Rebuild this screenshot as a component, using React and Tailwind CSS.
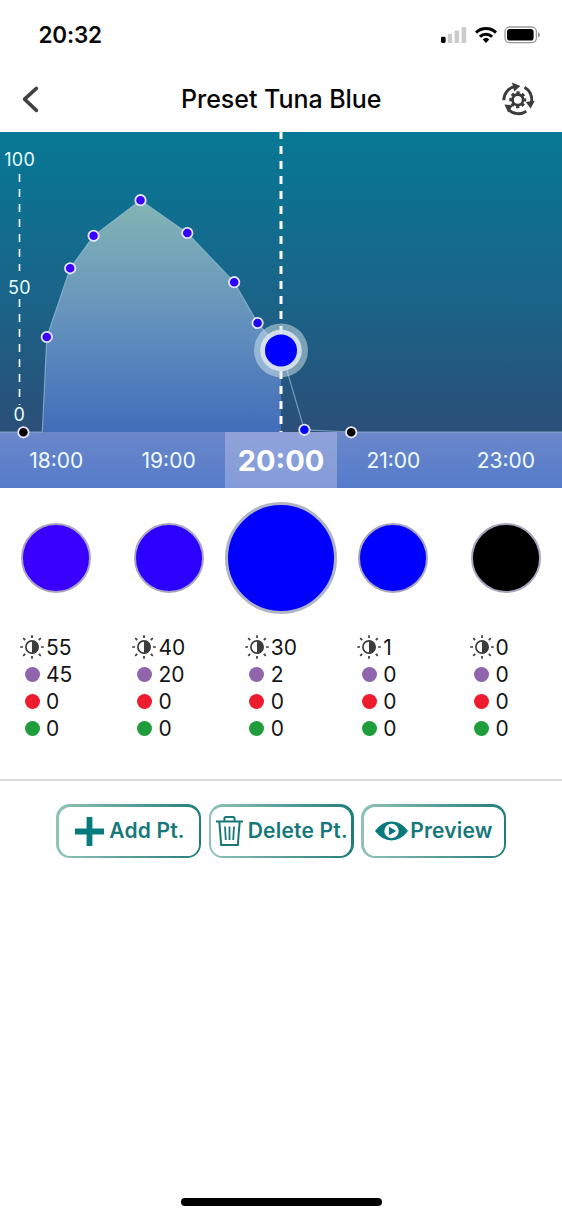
const points = [
  { x: 46.8, y: 205, color: '#3a00ff' },
  { x: 70.2, y: 136.3, color: '#3a00ff' },
  { x: 93.6, y: 103.8, color: '#3a00ff' },
  { x: 140.5, y: 68.2, color: '#3a00ff' },
  { x: 187.3, y: 101, color: '#3000ff' },
  { x: 234.2, y: 150.2, color: '#2c00ff' },
  { x: 257.6, y: 191, color: '#2000f4' },
  { x: 304.4, y: 297.8, color: '#0000ff' },
  { x: 351.2, y: 300.3, color: '#000000' },
  { x: 23.4, y: 300.3, color: '#000000' },
];

const columns = [
  { time: '18:00', fill: 'bg-[#3a00ff]', values: [55, 45, 0, 0] },
  { time: '19:00', fill: 'bg-[#2b00ff]', values: [40, 20, 0, 0] },
  { time: '20:00', fill: 'bg-[#0000ff]', values: [30, 2, 0, 0], active: true },
  { time: '21:00', fill: 'bg-[#0000ff]', values: [1, 0, 0, 0] },
  { time: '23:00', fill: 'bg-black', values: [0, 0, 0, 0] },
];

const channelDots = ['bg-[#9065ad]', 'bg-[#ec1c2e]', 'bg-[#1f9d3a]'];

function StatusBar() {
  return (
    <div className="flex h-[68px] items-center justify-between pl-[38.5px] pr-[21px]">
      <span className="pt-[2px] text-[22.5px] font-semibold tracking-[-0.2px] text-[#0a0a0a]">20:32</span>
      <div className="flex items-center gap-[7.5px] pt-px">
        <svg width="26" height="16" viewBox="0 0 26 16">
          <rect x="0" y="9.8" width="4.6" height="6.2" rx="1.4" fill="#000" />
          <rect x="6.8" y="6.8" width="4.4" height="9.2" rx="1" fill="#cbcbcb" />
          <rect x="13.6" y="3.4" width="4.6" height="12.6" rx="1" fill="#cbcbcb" />
          <rect x="20.6" y="0" width="4.6" height="16" rx="1" fill="#cbcbcb" />
        </svg>
        <svg width="22" height="16" viewBox="0 0 22 16" fill="none" stroke="#000" strokeWidth="3">
          <path d="M1 5.6A14.3 14.3 0 0 1 21 5.6" />
          <path d="M4.9 9.7A8.7 8.7 0 0 1 17.1 9.7" />
          <path d="M7.7 12.4A4.8 4.8 0 0 1 14.3 12.4L11 15.9Z" fill="#000" stroke="none" />
        </svg>
        <svg width="37" height="18" viewBox="0 0 37 18">
          <rect x="1" y="1" width="31.4" height="15.6" rx="4.6" fill="none" stroke="#999" strokeWidth="1.3" />
          <rect x="3" y="3" width="26.6" height="11.6" rx="2.8" fill="#000" />
          <path d="M34 6.2C36.4 7 36.4 10.6 34 11.4Z" fill="#888" />
        </svg>
      </div>
    </div>
  );
}

function GearCycleIcon() {
  return (
    <svg className="-mt-[2px]" width="36" height="36" viewBox="0 0 36 36" fill="none" stroke="#3b3b3b">
      <g strokeWidth="2.9">
        <path d="M3.8 19.3A14.2 14.2 0 0 1 15 5.4" />
        <path d="M24.5 6.2A14.2 14.2 0 0 1 31.6 21" />
        <path d="M26.3 30.3A14.2 14.2 0 0 1 8.8 29" />
      </g>
      <g fill="#3b3b3b" stroke="none">
        <path d="M12 1.6L20.4 5L14.2 10.6Z" />
        <path d="M25.8 21L34.8 19.8L30.6 27.4Z" />
        <path d="M4.4 23.4L12.8 24.4L8.2 31.6Z" />
      </g>
      <circle cx="17.8" cy="18.8" r="5.3" strokeWidth="2.8" />
      <circle cx="17.8" cy="18.8" r="7.2" strokeWidth="2.6" strokeDasharray="3.2 2.455" strokeDashoffset="1.6" />
    </svg>
  );
}

function Header() {
  return (
    <header className="grid h-16 grid-cols-[1fr_auto_1fr] items-center pl-5 pr-[26.5px]">
      <svg width="36" height="30" viewBox="0 0 36 30" fill="none" stroke="#424242" strokeWidth="3.6" strokeLinecap="round">
        <path d="M16.4 3.4L4.6 14.2L16.4 25.4" strokeLinejoin="round" />
      </svg>
      <h1 className="ml-[7px] text-[25px] font-medium tracking-[-0.04px] text-[#050505]">Preset Tuna Blue</h1>
      <div className="flex justify-end">
        <GearCycleIcon />
      </div>
    </header>
  );
}

function Chart() {
  const curve =
    'M0 300H42.3L46.8 205L70.2 136.3L93.6 103.8L140.5 68.2L187.3 101L234.2 150.2L257.6 191L281 218.4L304.4 297.8L351.2 300';
  return (
    <svg className="relative z-10 block shrink-0 overflow-visible" width="562" height="300" viewBox="0 0 562 300">
      <defs>
        <linearGradient id="sea" x1="0" y1="0" x2="0" y2="1">
          <stop offset="0" stopColor="#077895" />
          <stop offset="0.5" stopColor="#18668a" />
          <stop offset="1" stopColor="#2b4f78" />
        </linearGradient>
        <linearGradient id="area" x1="0" y1="0" x2="0" y2="1">
          <stop offset="0" stopColor="#83b5b4" />
          <stop offset="0.5" stopColor="#6593bd" />
          <stop offset="1" stopColor="#416dba" />
        </linearGradient>
      </defs>
      <rect width="562" height="300" fill="url(#sea)" />
      <path d="M42.3 300L46.8 205L70.2 136.3L93.6 103.8L140.5 68.2L187.3 101L234.2 150.2L257.6 191L281 218.4V300Z" fill="url(#area)" />
      <path d={curve + 'H562'} fill="none" stroke="#9ec2da" strokeOpacity="0.65" strokeWidth="1.2" />
      <path d="M19.5 42V139M19.5 167V273" stroke="#fff" strokeWidth="1.6" strokeDasharray="8 7" />
      <path d="M281 0V300" stroke="#fff" strokeWidth="3" strokeDasharray="8 7" strokeDashoffset="1" />
      <g fill="#e5ffff" fontSize="18" textAnchor="middle" letterSpacing="0.3">
        <text x="19.7" y="33.7">100</text>
        <text x="19.5" y="161.7">50</text>
        <text x="19.3" y="289">0</text>
      </g>
      {points.map((p) => (
        <circle key={p.x} cx={p.x} cy={p.y} r="5.2" fill={p.color} stroke="#e9e6ff" strokeWidth="1.8" />
      ))}
      <circle cx="281" cy="218.4" r="27" fill="#d7e7ee" fillOpacity="0.5" />
      <circle cx="281" cy="218.4" r="20.8" fill="#dce6ee" fillOpacity="0.88" />
      <circle cx="281" cy="218.4" r="16" fill="#0000ff" />
    </svg>
  );
}

function TimeBar() {
  return (
    <div className="grid h-14 grid-cols-5 bg-linear-to-b from-[#6b87ca] to-[#557bca] text-[#effcff]">
      {columns.map((c) => (
        <div
          key={c.time}
          className={
            c.active
              ? 'flex items-center justify-center bg-[#c8cdf0]/40 pt-[2px] text-[29px] font-bold text-white'
              : 'flex items-center justify-center pt-[2px] text-[21px]'
          }
        >
          {c.time}
        </div>
      ))}
    </div>
  );
}

function BrightnessIcon() {
  return (
    <svg className="block shrink-0" width="24" height="24" viewBox="0 0 24 24" fill="none" stroke="#3c3c3c">
      <circle cx="12" cy="12" r="6.1" strokeWidth="1.7" />
      <path d="M12 5.4A6.6 6.6 0 0 1 12 18.6Z" fill="#3c3c3c" stroke="none" />
      <path
        d="M12 .2V3M12 21V23.8M.2 12H3M21 12H23.8M3.2 3.2L5.2 5.2M18.8 18.8L20.8 20.8M3.2 20.8L5.2 18.8M18.8 5.2L20.8 3.2"
        strokeWidth="1.7"
      />
    </svg>
  );
}

function ColorColumn({ column }) {
  const [brightness, ...channels] = column.values;
  return (
    <div className="flex flex-col">
      <div className="flex h-[139px] items-center justify-center">
        <div
          className={`shrink-0 rounded-full ${column.fill} ${
            column.active
              ? 'size-[112px] border-[3px] border-[#b0b4c4]'
              : 'size-[70px] border-2 border-[#a9a5bd]'
          }`}
        />
      </div>
      <div className="mt-[6.5px] flex flex-col pl-5 text-[21px] leading-[27px] text-[#151515]">
        <div className="flex items-center">
          <BrightnessIcon />
          <span className="ml-[2px]">{brightness}</span>
        </div>
        {channels.map((value, i) => (
          <div key={i} className="flex items-center pl-[4.5px]">
            <span className={`size-[15px] shrink-0 rounded-full ${channelDots[i]}`} />
            <span className="ml-[6.5px]">{value}</span>
          </div>
        ))}
      </div>
    </div>
  );
}

function ActionButton({ children }) {
  return (
    <button className="h-[54px] w-[145px] rounded-[14px] bg-linear-to-r from-[#8fc3b5] to-[#1d7d7b] p-[2.5px]">
      <span className="flex h-full w-full items-center justify-center whitespace-nowrap rounded-[11.5px] bg-white text-[21px] font-semibold tracking-[0.2px] text-[#16787a]">
        {children}
      </span>
    </button>
  );
}

function Actions() {
  return (
    <div className="flex justify-center gap-[7.5px] pt-[23px]">
      <ActionButton>
        <svg className="ml-[3px] mr-[5px] shrink-0" width="29" height="29" viewBox="0 0 29 29">
          <path d="M11.6 0H17.4V11.6H29V17.4H17.4V29H11.6V17.4H0V11.6H11.6Z" fill="#057b7e" />
        </svg>
        Add Pt.
      </ActionButton>
      <ActionButton>
        <svg className="ml-[2px] mr-[4.5px] shrink-0" width="27" height="30" viewBox="0 0 27 30" fill="none" stroke="#16787a" strokeWidth="2">
          <path d="M0 5.4H27M8.4 5V2.6Q8.4 1 10 1H17Q18.6 1 18.6 2.6V5M3.3 5.4L5.2 29H21.8L23.7 5.4" />
          <path d="M9 10.5L9.8 24M13.5 10.5V24M18 10.5L17.2 24" strokeWidth="1.8" />
        </svg>
        Delete Pt.
      </ActionButton>
      <ActionButton>
        <svg className="ml-px mr-[2px] shrink-0" width="33" height="20" viewBox="0 0 33 20">
          <path d="M0 10Q7 .6 16.5 .6T33 10Q26 19.4 16.5 19.4T0 10Z" fill="#087a7c" />
          <circle cx="16.5" cy="10" r="7.2" fill="#fff" />
          <path d="M14 5.7L21.3 10L14 14.3Z" fill="#087a7c" />
        </svg>
        Preview
      </ActionButton>
    </div>
  );
}

export default function App() {
  return (
    <div className="flex h-[1218px] w-[562px] flex-col overflow-hidden bg-white font-['Inter',sans-serif]">
      <StatusBar />
      <Header />
      <Chart />
      <TimeBar />
      <div className="grid h-[291px] grid-cols-5">
        {columns.map((c) => (
          <ColorColumn key={c.time} column={c} />
        ))}
      </div>
      <div className="h-[2px] shrink-0 bg-[#d9d9d9]" />
      <Actions />
      <div className="mb-3 mt-auto h-2 w-[201px] self-center rounded-full bg-black" />
    </div>
  );
}
